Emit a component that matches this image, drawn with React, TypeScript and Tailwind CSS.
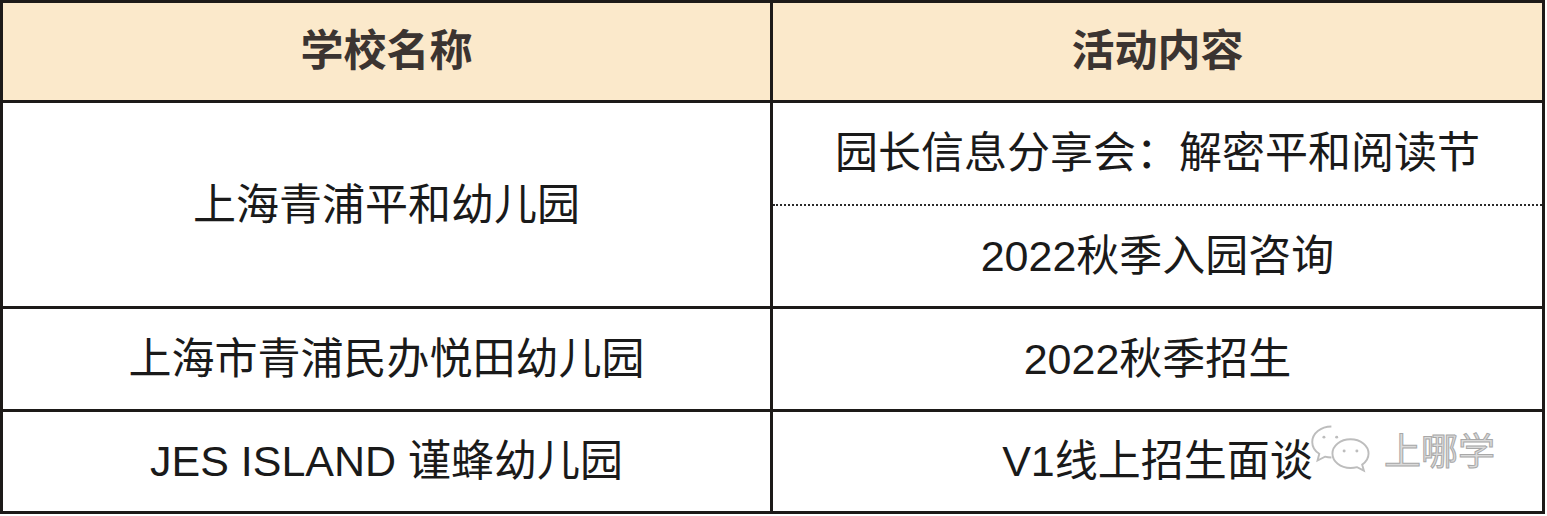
import React from "react";

const font = { fontFamily: '"Liberation Sans", "Noto Sans CJK SC", sans-serif' };

function Watermark() {
  return (
    <div className="pointer-events-none absolute left-[1308px] top-[422px] flex items-center gap-[8px]">
      <svg width="68" height="60" viewBox="0 0 64 56" fill="none" stroke="#bdbdbd" strokeWidth="1.8">
        <path d="M22 4c-10 0-18 6.5-18 14.5 0 4.6 2.6 8.6 6.6 11.2L9 36l7-3.6c1.8.5 3.8.8 6 .8" />
        <circle cx="15" cy="14" r="1.4" fill="#bdbdbd" stroke="none" />
        <circle cx="27" cy="14" r="1.4" fill="#bdbdbd" stroke="none" />
        <path d="M40 16c9.5 0 17 6 17 13.5 0 4.2-2.3 7.9-6 10.4l1.6 5.6-6.4-3.2c-1.9.5-4 .8-6.2.8-9.5 0-17-6-17-13.6S30.5 16 40 16z" />
        <circle cx="34" cy="27" r="1.4" fill="#bdbdbd" stroke="none" />
        <circle cx="46" cy="27" r="1.4" fill="#bdbdbd" stroke="none" />
      </svg>
      <span className="text-[37px] leading-none text-[#dadada] [-webkit-text-stroke:1px_#a8a8a8]">上哪学</span>
    </div>
  );
}

export default function App() {
  return (
    <div className="relative w-[1547px] h-[516px] bg-white" style={font}>
      <div className="flex h-[514px] w-[1545px] flex-col border-[3px] border-[#1d1a18]">
        <div className="flex h-[97px] bg-[#fbe9cb] text-[43px] font-bold text-[#3b3431]">
          <div className="flex w-[767px] items-center justify-center">学校名称</div>
          <div className="flex flex-1 items-center justify-center border-l-[3px] border-[#1d1a18]">活动内容</div>
        </div>
        <div className="flex h-[206px] border-t-[3px] border-[#1d1a18] text-[43px] text-[#1a1a1a]">
          <div className="flex w-[767px] items-center justify-center pt-[2px]">上海青浦平和幼儿园</div>
          <div className="flex flex-1 flex-col border-l-[3px] border-[#1d1a18]">
            <div className="flex h-[101px] items-center justify-center">园长信息分享会：解密平和阅读节</div>
            <div className="flex flex-1 items-center justify-center border-t-[2px] border-dotted border-[#2a2a2a]">2022秋季入园咨询</div>
          </div>
        </div>
        <div className="flex h-[103px] border-t-[3px] border-[#1d1a18] text-[43px] text-[#1a1a1a]">
          <div className="flex w-[767px] items-center justify-center">上海市青浦民办悦田幼儿园</div>
          <div className="flex flex-1 items-center justify-center border-l-[3px] border-[#1d1a18]">2022秋季招生</div>
        </div>
        <div className="flex flex-1 border-t-[3px] border-[#1d1a18] text-[43px] text-[#1a1a1a]">
          <div className="flex w-[767px] items-center justify-center">JES ISLAND 谨蜂幼儿园</div>
          <div className="flex flex-1 items-center justify-center border-l-[3px] border-[#1d1a18]">V1线上招生面谈</div>
        </div>
      </div>
      <Watermark />
    </div>
  );
}
